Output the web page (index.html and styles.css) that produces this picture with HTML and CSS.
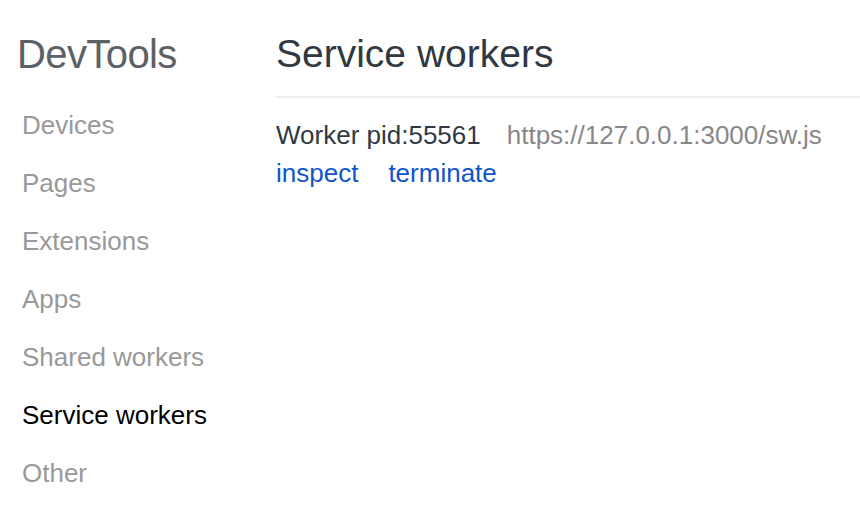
FILE: index.html
```html
<!DOCTYPE html>
<html>
<head>
<meta charset="utf-8">
<link rel="stylesheet" href="styles.css">
</head>
<body>
<div class="page">
  <aside class="sidebar">
    <h1 class="brand">DevTools</h1>
    <nav class="nav">
      <div class="nav-item">Devices</div>
      <div class="nav-item">Pages</div>
      <div class="nav-item">Extensions</div>
      <div class="nav-item">Apps</div>
      <div class="nav-item">Shared workers</div>
      <div class="nav-item selected">Service workers</div>
      <div class="nav-item">Other</div>
    </nav>
  </aside>
  <main class="content">
    <header class="content-header">
      <h2 class="title">Service workers</h2>
    </header>
    <div class="worker">
      <div class="worker-row">
        <span class="worker-name">Worker pid:55561</span>
        <span class="worker-url">https://127.0.0.1:3000/sw.js</span>
      </div>
      <div class="actions">
        <a class="action">inspect</a>
        <a class="action">terminate</a>
      </div>
    </div>
  </main>
</div>
</body>
</html>
```
FILE: styles.css
```css
html, body {
  margin: 0;
  padding: 0;
  background: #fff;
}
body {
  font-family: "Liberation Sans", Arial, sans-serif;
  color: #303942;
}
.page {
  display: flex;
}
.sidebar {
  width: 258px;
  padding-left: 17px;
  flex-shrink: 0;
}
.brand {
  margin: 31px 0 0 0;
  font-size: 40px;
  line-height: 46px;
  font-weight: normal;
  color: #5c6166;
  letter-spacing: -0.6px;
}
.nav {
  margin-top: 19px;
  padding-left: 5px;
}
.nav-item {
  font-size: 26px;
  line-height: 58px;
  color: #999;
}
.nav-item.selected {
  color: #000;
}
.content {
  flex: 1;
  padding-left: 1px;
}
.content-header {
  padding-top: 31px;
  padding-bottom: 19px;
  border-bottom: 2px solid #eee;
}
.title {
  margin: 0;
  font-size: 39px;
  line-height: 46px;
  font-weight: normal;
  color: #303942;
}
.worker {
  margin-top: 18px;
  font-size: 26px;
  line-height: 38px;
}
.worker-row {
  display: flex;
  gap: 26px;
}
.worker-name {
  color: #303942;
}
.worker-url {
  color: #888;
}
.actions {
  display: flex;
  gap: 30px;
}
.action {
  color: #15c;
  cursor: pointer;
}
```
